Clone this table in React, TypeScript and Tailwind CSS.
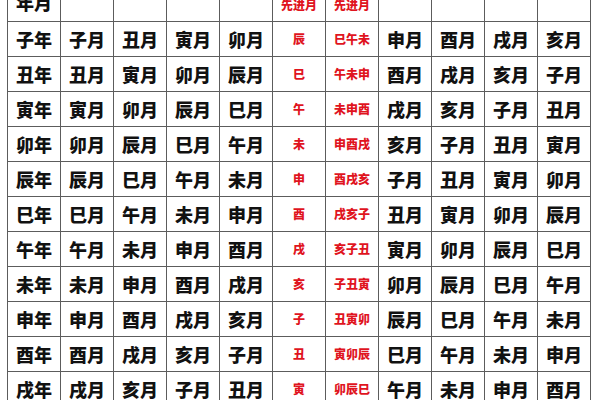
import React from "react";

const branches = ["子", "丑", "寅", "卯", "辰", "巳", "午", "未", "申", "酉", "戌", "亥"];

const b = (i: number) => branches[i % 12];

const rows = Array.from({ length: 11 }, (_, i) => ({
  year: `${b(i)}年`,
  before: [0, 1, 2, 3].map((k) => `${b(i + k)}月`),
  single: b(i + 4),
  triple: `${b(i + 5)}${b(i + 6)}${b(i + 7)}`,
  after: [8, 9, 10, 11].map((k) => `${b(i + k)}月`),
}));

const cell =
  "w-[53px] h-[35px] border border-[#5c5c5c] text-center align-middle p-0";
const black = "text-[18px] font-black text-[#111]";
const red = "text-[12px] font-black text-[#e0141e]";

export default function App() {
  return (
    <div
      className="w-[600px] h-[400px] overflow-hidden bg-white"
      style={{ fontFamily: '"Noto Sans CJK SC", sans-serif' }}
    >
      <table className="ml-[7px] mt-[-14px] border-collapse table-fixed w-[583px]">
        <tbody>
          <tr>
            <td className={`${cell} ${black} leading-none`}>
              <div className="-mt-[4px]">年月</div>
            </td>
            <td className={cell}></td>
            <td className={cell}></td>
            <td className={cell}></td>
            <td className={cell}></td>
            <td className={`${cell} ${red} leading-none`}>
              <div className="mt-[2px]">先进月</div>
            </td>
            <td className={`${cell} ${red} leading-none`}>
              <div className="mt-[2px]">先进月</div>
            </td>
            <td className={cell}></td>
            <td className={cell}></td>
            <td className={cell}></td>
            <td className={cell}></td>
          </tr>
          {rows.map((row, index) => {
            return (
              <tr key={index}>
                <td className={`${cell} ${black}`}>{row.year}</td>
                {row.before.map((m, k) => (
                  <td key={k} className={`${cell} ${black}`}>
                    {m}
                  </td>
                ))}
                <td className={`${cell} ${red}`}>{row.single}</td>
                <td className={`${cell} ${red}`}>{row.triple}</td>
                {row.after.map((m, k) => (
                  <td key={k} className={`${cell} ${black}`}>
                    {m}
                  </td>
                ))}
              </tr>
            );
          })}
        </tbody>
      </table>
    </div>
  );
}
